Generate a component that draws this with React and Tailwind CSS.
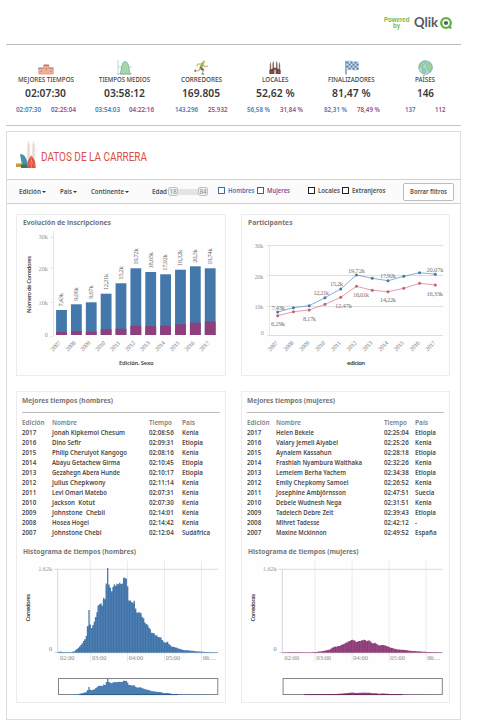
import React, { useLayoutEffect, useRef, useState } from "react";

const BLUE = "#4477aa";
const PURPLE = "#8f3f7b";

// Condenses or expands one line of text to a set width.
function Fit({ w, className = "", children }) {
  const ref = useRef(null);
  const [scale, setScale] = useState(1);
  useLayoutEffect(() => {
    const natural = ref.current.offsetWidth;
    if (natural) setScale(w / ref.current.getBoundingClientRect().width * scale);
  }, [w]);
  return (
    <span className={"block shrink-0 whitespace-pre " + className} style={{ width: w }}>
      <span ref={ref} className="inline-block origin-left whitespace-pre" style={{ transform: `scaleX(${scale})` }}>
        {children}
      </span>
    </span>
  );
}

const Podium = () => (
  <svg width="16" height="14" viewBox="0 0 16 14">
    <path d="M.8 7.5h5V4.3h5v2.9h4.4V13H.8z" fill="#f4b095" stroke="#dd8468" strokeWidth=".7" />
    <path d="M.6 8V7h5" stroke="#7c8da5" strokeWidth="1" fill="none" />
    <path d="M5.6 4.2h5.4" stroke="#cf5b4b" strokeWidth="1.1" />
    <path d="M11 7h4.5" stroke="#5f9fa0" strokeWidth="1.1" />
    <path d="M8.3 6.5v3M3.3 9.5v1.5M13 9.5v1.5" stroke="#b8604e" strokeWidth=".7" />
  </svg>
);
const Bell = () => (
  <svg width="15" height="15" viewBox="0 0 15 15">
    <path d="M1 0v14.5M0 14h15M1 7h14" stroke="#a9bcd0" strokeWidth=".7" fill="none" />
    <path d="M2.8 14C4.6 13 3.8 1.5 8.2 1.5S11.8 13 13.6 14z" fill="#a5d6ae" stroke="#6bab7a" strokeWidth=".7" />
  </svg>
);
const Runner = () => (
  <svg width="15" height="15" viewBox="0 0 15 15" fill="none" strokeLinecap="round" strokeLinejoin="round">
    <circle cx="9.8" cy="1.8" r="1.4" fill="#dcc063" />
    <path d="M8.6 3.6L6.8 7.6" stroke="#83b56f" strokeWidth="2.6" />
    <path d="M7.5 3.8L4 4.2 2.8 6M9 4.6l1.5 2 3-.4" stroke="#d3b75c" strokeWidth="1.2" />
    <path d="M6.7 8.2l2.5 1.7" stroke="#4a6592" strokeWidth="2.2" />
    <path d="M9.2 10l-.8 3.5M6.2 8.5L4.7 10.7 1 11" stroke="#cfae63" strokeWidth="1.2" />
    <path d="M8 13.7l1.8.5M1.2 10v1.7" stroke="#3e5e90" strokeWidth="1" />
  </svg>
);
const Church = () => (
  <svg width="12" height="15" viewBox="0 0 12 15">
    <path d="M.8 14V5l.7-3.5.7 3.5V14zM3.5 14V3.5l.8-3 .7 3V14zM7 14V3.5l.7-3 .8 3V14zM9.8 14V5l.7-3.5.7 3.5V14z" fill="#8c6a66" />
    <path d="M.4 14V10L6 7.5l5.6 2.5V14z" fill="#694541" />
    <path d="M5 14v-3.4l1-1.3 1 1.3V14M2.2 11v2M9.7 11v2" fill="#d5b3a3" stroke="#b98f83" strokeWidth=".4" />
  </svg>
);
const Flag = () => (
  <svg width="14" height="15" viewBox="0 0 14 15">
    <path d="M1 .8V14.5" stroke="#557bab" strokeWidth="1.2" />
    <path d="M1.3 1.6q3 -1.5 6 0t6 0v8q-3 1.4-6 0t-6 0z" fill="#dbe6f2" stroke="#7c9ac1" strokeWidth=".4" />
    {[0, 1, 2, 3].map((r) =>
      [0, 1, 2].map((c) => <rect key={r + "-" + c} x={1.5 + c * 4 + (r % 2) * 2} y={1.6 + r * 2} width="2" height="2" fill="#5278aa" />)
    )}
  </svg>
);
const Globe = () => (
  <svg width="15" height="15" viewBox="0 0 15 15">
    <circle cx="7.5" cy="7.5" r="6.8" fill="#a9dcdf" stroke="#71aab1" strokeWidth=".7" />
    <path d="M2 3.5L5.2 1l3 .6-.8 2.2-2.2 1-.6 2.6L2.3 7 .9 7.5zM4.5 8.2l3 .8.4 1.8L6 13.8 4.5 12zM9 3.5l3-1.3 2 3.5v3.6l-2.4 3-1.4-3-1.8-2.2z" fill="#a3cf98" stroke="#6ba6a0" strokeWidth=".5" />
  </svg>
);

const KPIS = [
  { icon: <Podium />, label: "MEJORES TIEMPOS", lw: 56, value: "02:07:30", vw: 41, a: "02:07:30", aw: 25, b: "02:25:04", bw: 25, gap: 10 },
  { icon: <Bell />, label: "TIEMPOS MEDIOS", lw: 51, value: "03:58:12", vw: 41, a: "03:54:03", aw: 25, b: "04:22:16", bw: 25, gap: 9.5 },
  { icon: <Runner />, label: "CORREDORES", lw: 41, value: "169.805", vw: 38, a: "143.296", aw: 23, b: "25.932", bw: 19.5, gap: 10 },
  { icon: <Church />, label: "LOCALES", lw: 26.5, value: "52,62 %", vw: 38.5, a: "56,58 %", aw: 23, b: "31,84 %", bw: 23, gap: 10 },
  { icon: <Flag />, label: "FINALIZADORES", lw: 46.5, value: "81,47 %", vw: 38.5, a: "82,31 %", aw: 23, b: "78,49 %", bw: 23, gap: 10 },
  { icon: <Globe />, label: "PAÍSES", lw: 20, value: "146", vw: 17, a: "137", aw: 10.5, b: "112", bw: 10.5, gap: 19.5 },
];

function Kpi({ k }) {
  return (
    <div className="flex flex-col items-center">
      <div className="flex h-[15px] items-end justify-center">{k.icon}</div>
      <Fit w={k.lw} className="mt-px h-[8px] text-[7px] font-medium leading-[8px] text-[#444]">{k.label}</Fit>
      <Fit w={k.vw} className="mt-[2px] h-[14px] text-[10.5px] font-semibold leading-[14px] text-[#383838]">{k.value}</Fit>
      <div className="mt-[5px] flex h-[10px] text-[6.8px] font-semibold leading-[10px]" style={{ gap: k.gap }}>
        <Fit w={k.aw} className="text-[#447ab3]">{k.a}</Fit>
        <Fit w={k.bw} className="text-[#9a4a86]">{k.b}</Fit>
      </div>
    </div>
  );
}

const YEARS = [2007, 2008, 2009, 2010, 2011, 2012, 2013, 2014, 2015, 2016, 2017];
const BARS = [
  ["7,43k", 310, 332], ["9,06k", 304.3, 331], ["9,67k", 302.3, 331.7], ["12,21k", 293.7, 329.3],
  ["15,2k", 283.3, 328.7], ["19,72k", 268.3, 325.7], ["18,65k", 272, 326], ["17,92k", 274.3, 325.7],
  ["19,32k", 269.7, 324.3], ["20,3k", 266.3, 322.7], ["19,74k", 268.3, 321.7],
];

const serif = "font-['Liberation_Serif',serif]";
const sans = "font-['Noto_Sans',sans-serif]";

function Years({ x0, step }) {
  return YEARS.map((y, i) => (
    <text key={y} transform={`translate(${x0 + i * step + 5},343.5) rotate(-45)`} textAnchor="end" fontSize="6" textLength="11.5" fill="#777">{y}</text>
  ));
}

function BarChart() {
  return (
    <svg width="208" height="143" viewBox="17 231 208 143" className={"block " + serif}>
      <path d="M53.5 231V336.5M50 237.3h3.5M50 268.3h3.5M50 302.3h3.5M50 336.3h3.5" stroke="#e4e4e4" fill="none" />
      <g fontSize="6.3" fill="#999" textAnchor="end">
        <text x="48" y="239.3" textLength="9.5">30k</text>
        <text x="48" y="270.5" textLength="9.5">20k</text>
        <text x="48" y="304.8" textLength="9.5">10k</text>
        <text x="48" y="336.5">0</text>
      </g>
      {BARS.map(([label, top, split], i) => {
        const x = 56.1 + i * 14.87;
        return (
          <g key={label}>
            <rect x={x} y={top} width="10.8" height={335 - top} fill={BLUE} />
            <rect x={x} y={split} width="10.8" height={335 - split} fill={PURPLE} />
            <text transform={`translate(${x + 7.3},${top - 3.5}) rotate(-90)`} fontSize="6.5" fill="#666" textLength={label.length === 6 ? 16.5 : 13.5}>{label}</text>
          </g>
        );
      })}
      <Years x0={56.2} step={14.87} />
      <g className={sans} fontSize="5.8" fontWeight="600" fill="#444">
        <text transform="translate(31.3,313) rotate(-90)" textLength="57">Número de Corredores</text>
        <text x="119" y="364.9" textLength="34.5">Edición, Sexo</text>
      </g>
    </svg>
  );
}

const MEN = [312, 307.7, 305.7, 297.7, 289, 275, 278.3, 280.7, 276.3, 272.7, 274.3];
const WOMEN = [315.7, 311.7, 310, 304.3, 297.3, 286.3, 290.3, 291.7, 288.3, 283.3, 285];
const LABELS = [
  ["7,43k", 271.5, 310, 13.5], ["12,21k", 313.5, 295, 15.5], ["15,2k", 330, 285.7, 13], ["19,72k", 348, 272.7, 17],
  ["17,92k", 380, 278, 16], ["20,07k", 426.5, 271.8, 17], ["6,29k", 271, 326.2, 14], ["8,17k", 303, 321.2, 13],
  ["12,47k", 335, 308, 17], ["16,01k", 353, 297, 16], ["14,22k", 380, 302, 16], ["16,33k", 426.5, 296, 16.5],
];
const lx = (i) => 277.7 + i * 15.76;

function Series({ ys, color }) {
  return (
    <g>
      <polyline points={ys.map((y, i) => `${lx(i)},${y}`).join(" ")} fill="none" stroke={color} strokeWidth=".6" />
      {ys.map((y, i) => <circle key={i} cx={lx(i)} cy={y} r="1.5" fill={color} />)}
    </g>
  );
}

function LineChart() {
  return (
    <svg width="207" height="143" viewBox="242 231 207 143" className={"block " + serif}>
      <path d="M267 245.5H443M267 275.5H443M267 306.5H443M267 335.5H443" stroke="#dedede" />
      <path d="M269.5 245V337" stroke="#e9e9e9" />
      <g fontSize="6.3" fill="#999" textAnchor="end">
        <text x="263.5" y="247.5" textLength="9">30k</text>
        <text x="263.5" y="278.5" textLength="9">20k</text>
        <text x="263.5" y="308.5" textLength="9">10k</text>
        <text x="264" y="335.3">0</text>
      </g>
      <Series ys={MEN} color="#4079b0" />
      <Series ys={WOMEN} color="#c8606f" />
      {LABELS.map(([t, x, y, w]) => <text key={t} x={x} y={y} textLength={w} fontSize="6.5" fill="#777">{t}</text>)}
      <Years x0={273.3} step={15.76} />
      <text x="347" y="364.9" textLength="18" className={sans} fontSize="5.8" fontWeight="600" fill="#333">edicion</text>
    </svg>
  );
}

// Outline points: x, height, in thirds of a pixel from the plot's bottom-left corner.
const MEN_HIST = [[0,1],[10,3],[16,1],[40,1],[50,4],[60,12],[70,22],[80,37],[87,52],[90,77],[92,128],[95,130],[97,97],[99,69],[105,82],[109,84],[113,105],[118,119],[121,147],[125,145],[135,142],[138,162],[143,165],[145,202],[148,217],[149,247],[151,245],[154,207],[156,197],[160,187],[165,194],[169,205],[172,187],[175,212],[179,200],[183,215],[187,207],[191,197],[195,215],[201,227],[204,239],[207,212],[211,187],[215,149],[221,159],[225,149],[231,151],[237,117],[243,125],[255,107],[265,87],[275,75],[281,62],[295,52],[300,49],[310,44],[320,30],[330,31],[340,19],[355,15],[375,8],[395,6],[425,3],[455,1],[479,0]];
const WOMEN_HIST = [[0,0],[45,1],[60,0],[85,0],[105,2],[125,5],[143,9],[155,17],[170,19],[183,25],[195,31],[205,37],[215,37],[223,32],[232,34],[245,39],[253,34],[262,37],[270,27],[280,29],[290,21],[303,23],[315,19],[330,13],[345,9],[365,8],[385,5],[415,3],[445,1],[479,0]];

function heightAt(points, x) {
  const j = points.findIndex((p) => p[0] >= x);
  if (j < 0) return 0;
  if (j === 0) return points[0][1];
  const [x0, y0] = points[j - 1];
  const [x1, y1] = points[j];
  return y0 + ((y1 - y0) * (x - x0)) / (x1 - x0);
}

const barsPath = (bars, left, base, k) =>
  `M${left} ${base}` + bars.map((h, i) => `V${(base - h * k).toFixed(2)}H${(left + (i + 1) * 1.333).toFixed(2)}`).join("") + `V${base}Z`;

function Histogram({ points, color, edge, x0, axis, right, yLabel }) {
  const bars = Array.from({ length: 120 }, (_, i) => {
    const h = heightAt(points, i * 4 + 2) / 3;
    return Math.max(0, h * (1 + (((i * 7) % 5) - 2) * 0.015));
  });
  return (
    <svg width="208" height="144" viewBox={`${x0} 558 208 144`} className={"block " + serif}>
      {[32.7, 69.8, 106.8, 143.7].map((dx) => (
        <path key={dx} d={`M${axis + dx} 561V662`} stroke="#e6e6e6" strokeWidth=".8" />
      ))}
      <path d={`M${axis - 4} 569.3H${right}`} stroke="#ddd" />
      <path d={`M${axis - 3} 652.6H${right}M${axis} 569V653`} stroke="#ccc" strokeWidth=".8" fill="none" />
      <path d={barsPath(bars, axis, 652.5, 1)} fill={color} />
      {bars.map((h, i) =>
        i % 2 === 0 && h > 2 ? <path key={i} d={`M${axis + i * 1.333} 652.5v${-h * 0.97}`} stroke={edge} strokeWidth=".5" opacity=".55" /> : null
      )}
      <path d={`M${axis} 652.6H${right}`} stroke={color} strokeWidth=".5" />
      <g fontSize="6.3" fill="#888">
        <text x={axis - 19.5} y="571.2" textLength="14" fill="#999">1.62k</text>
        <text x={axis - 8.8} y="651">0</text>
        {["02:00", "03:00", "04:00", "05:00", "06:…"].map((t, i) => (
          <text key={t} x={axis + [2.3, 34.2, 71, 108, 145][i]} y="660.3" textLength={i === 4 ? 13 : 14.5}>{t}</text>
        ))}
      </g>
      <text transform={`translate(${axis - 27.5},621.5) rotate(-90)`} textLength="27.5" className={sans} fontSize="5.8" fontWeight="600" fill="#333">{yLabel}</text>
      <rect x={axis + 0.8} y="678.5" width={right - axis - 1} height="16" fill="none" stroke="#858585" />
      <path d={barsPath(bars, axis, 695, 0.19)} fill={color} />
      <path d={`M${axis + 22} 694.6H${right - 40}`} stroke={edge} strokeWidth=".8" />
    </svg>
  );
}

const MEN_ROWS = [
  ["2017", "Jonah Kipkemoi Chesum", 73, "02:08:56", "Kenia", 16.5],
  ["2016", "Dino Sefir", 29, "02:09:31", "Etiopia", 21],
  ["2015", "Philip Cheruiyot Kangogo", 75, "02:08:16", "Kenia", 16.5],
  ["2014", "Abayu Getachew Girma", 68, "02:10:45", "Etiopia", 21],
  ["2013", "Gezahegn Abera Hunde", 68, "02:10:17", "Etiopia", 21],
  ["2012", "Julius Chepkwony", 53.5, "02:11:14", "Kenia", 16.5],
  ["2011", "Levi Omari Matebo", 55, "02:07:31", "Kenia", 16.5],
  ["2010", "Jackson  Kotut", 43, "02:07:30", "Kenia", 16.5],
  ["2009", "Johnstone  Chebii", 53, "02:14:01", "Kenia", 16.5],
  ["2008", "Hosea Hogei", 37, "02:14:42", "Kenia", 16.5],
  ["2007", "Johnstone Chebi", 49.5, "02:12:04", "Sudáfrica", 28],
];
const WOMEN_ROWS = [
  ["2017", "Helen Bekele", 38, "02:25:04", "Etiopia", 21],
  ["2016", "Valary Jemeli Aiyabei", 62, "02:25:26", "Kenia", 16.5],
  ["2015", "Aynalem Kassahun", 55.5, "02:28:18", "Etiopia", 21],
  ["2014", "Frashiah Nyambura Waithaka", 86, "02:32:26", "Kenia", 16.5],
  ["2013", "Lemelem Berha Yachem", 70, "02:34:38", "Etiopia", 21],
  ["2012", "Emily Chepkomy Samoei", 72.5, "02:26:52", "Kenia", 16.5],
  ["2011", "Josephine Ambjörnsson", 70, "02:47:51", "Suecia", 19.5],
  ["2010", "Debele Wudnesh Nega", 65.5, "02:31:51", "Kenia", 16.5],
  ["2009", "Tadelech Debre Zeit", 57.5, "02:39:43", "Etiopia", 21],
  ["2008", "Mihret Tadesse", 43.5, "02:42:12", "-", 2],
  ["2007", "Maxine Mckinnon", 50.5, "02:49:52", "España", 21.5],
];

function Times({ rows, cols }) {
  return (
    <div className="text-[6.7px] font-semibold leading-[10px] text-[#4a4a4a]">
      <div className={"grid h-[10px] text-[#808080] " + cols}>
        <Fit w={22.5}>Edición</Fit>
        <Fit w={25}>Nombre</Fit>
        <Fit w={23}>Tiempo</Fit>
        <Fit w={13}>País</Fit>
      </div>
      {rows.map(([year, name, nw, time, country, cw]) => (
        <div key={year} className={"grid h-[10px] " + cols}>
          <Fit w={14.2}>{year}</Fit>
          <Fit w={nw}>{name}</Fit>
          <Fit w={24.7}>{time}</Fit>
          <Fit w={cw}>{country}</Fit>
        </div>
      ))}
    </div>
  );
}

const card = "border border-[#ececec] bg-[#fefefe]";
const title = "h-[10px] text-[7px] font-bold leading-[10px] text-[#777]";

function Caret() {
  return <span className="ml-px mt-px h-0 w-0 border-x-[2px] border-t-[2px] border-x-transparent border-t-[#333]" />;
}

function Check({ label, w, box, text }) {
  return (
    <label className="flex items-center gap-[3px]">
      <span className={"block h-[7px] w-[7px] shrink-0 border bg-white " + box} />
      <Fit w={w} className={text}>{label}</Fit>
    </label>
  );
}

function CityLogo() {
  return (
    <svg width="21" height="28" viewBox="0 0 21 28">
      <path d="M11.4 23V6l1.2-5.5L13.8 6v17zM16.4 23V6l1.2-5.5L18.8 6v17z" fill="#f4ebe6" stroke="#dccbc5" strokeWidth=".4" />
      <path d="M12.6 3v15M17.6 3v15" stroke="#dda294" strokeWidth=".6" strokeDasharray="1 1.2" />
      <path d="M4 13c4.5 0 7 4 7.5 11H6z" fill="#4593a0" />
      <path d="M0 22.5h7v3.5H0z" fill="#c49b3d" />
      <path d="M5 23.5h6V27H5z" fill="#38717e" />
      <path d="M11 27c0-7 2-9.5 4.3-12.5 2.5 3 4.4 5.500 4.4 12.500z" fill="#dc5140" />
      <path d="M15.4 15.500v6M12 25l3.500-5.500L18.800 25M15.400 22v5" stroke="#f3b3a0" strokeWidth=".5" fill="none" />
    </svg>
  );
}

export default function App() {
  return (
    <div className="h-[725px] w-[477px] overflow-hidden bg-white pl-[6px] font-['Noto_Sans','Open_Sans',sans-serif]">
      <div className="w-[455px]">
        <header className="flex h-[45px] justify-end border-b border-[#bbb] pr-[8px] pt-[15px]">
          <div className="mr-[5px] mt-[2px] flex flex-col items-center font-['Liberation_Sans',sans-serif] text-[6.5px] font-bold leading-[6px] text-[#6cbc48]">
            <Fit w={25.5}>Powered</Fit>
            <Fit w={7}>by</Fit>
          </div>
          <Fit w={24} className="mt-[1px] h-[14px] font-['Lato',sans-serif] text-[12.5px] font-bold leading-[14px] text-[#56585c]">Qlik</Fit>
          <svg className="ml-[2px] mt-[2px]" width="13" height="13" viewBox="0 0 13 13">
            <circle cx="6" cy="6" r="4.8" fill="none" stroke="#5cb53c" strokeWidth="2.3" />
            <circle cx="6" cy="6" r="2.1" fill="#5a5c60" />
            <path d="M8.5 8.8l2.800 2.700" stroke="#5cb53c" strokeWidth="2" />
          </svg>
        </header>

        <section className="grid h-[81px] grid-cols-[79px_79px_74px_74px_79px_68px] border-b border-[#c4c4c4] pt-[15px]">
          {KPIS.map((k) => <Kpi key={k.label} k={k} />)}
        </section>

        <main className="mt-[5px] h-[589px] border border-[#ddd]">
          <div className="flex h-[47px] pl-[9px] pt-[9px]">
            <CityLogo />
            <Fit w={106} className="ml-[4px] mt-[6px] h-[18px] font-['Roboto',sans-serif] text-[13.5px] leading-[18px] text-[#da4f47]">DATOS DE LA CARRERA</Fit>
          </div>

          <div className="flex h-[25px] items-center border-y border-[#d0d0d0] bg-[#fbfbfb] pl-[12px] text-[6.8px] font-semibold leading-[10px] text-[#505050]">
            <div className="flex w-[41px] items-center"><Fit w={22}>Edición</Fit><Caret /></div>
            <div className="flex w-[31px] items-center"><Fit w={12}>País</Fit><Caret /></div>
            <div className="flex w-[61px] items-center"><Fit w={33}>Continente</Fit><Caret /></div>
            <Fit w={15}>Edad</Fit>
            <div className="ml-[1px] flex h-[9px] w-[40px] items-center justify-between text-[6.3px] font-normal leading-[7px] text-[#888]">
              <span className="flex h-[9px] w-[10px] items-center justify-center rounded-[2px] border border-[#c4c4c4] bg-[#f0f0f0]">18</span>
              <span className="h-[6px] grow bg-[#e4e4e4]" />
              <span className="flex h-[9px] w-[10px] items-center justify-center rounded-[2px] border border-[#c4c4c4] bg-[#f0f0f0]">84</span>
            </div>
            <div className="mb-[2px] ml-[10px] flex">
              <Check label="Hombres" w={26.5} box="border-[#356fae]" text="text-[#447ab3]" />
              <span className="w-[2.5px]" />
              <Check label="Mujeres" w={23} box="border-[#933c7c]" text="text-[#9a4a86]" />
              <span className="w-[18px]" />
              <Check label="Locales" w={22} box="border-[#222]" text="" />
              <span className="w-[2px]" />
              <Check label="Extranjeros" w={33.5} box="border-[#222]" text="" />
            </div>
            <button className="ml-auto mr-[6px] flex h-[18px] w-[51px] items-center justify-center rounded-[2px] border border-[#bdbdbd] bg-white">
              <Fit w={37}>Borrar filtros</Fit>
            </button>
          </div>

          <div className="grid grid-cols-[210px_209px] gap-[15px] pl-[9px] pt-[10px]">
            <section className={card + " h-[162px]"}>
              <div className="h-[16px] pl-[6px] pt-[3px]"><Fit w={88} className={title}>Evolución de inscripciones</Fit></div>
              <BarChart />
            </section>
            <section className={card + " h-[162px]"}>
              <div className="h-[16px] pl-[5.5px] pt-[3px]"><Fit w={44.5} className={title}>Participantes</Fit></div>
              <LineChart />
            </section>

            <section className={card + " h-[312px]"}>
              <div className="mx-[5px] h-[21px] border-b border-[#bbb] pt-[4px]"><Fit w={91} className={title}>Mejores tiempos (hombres)</Fit></div>
              <div className="pl-[5px] pt-[5px]"><Times rows={MEN_ROWS} cols="grid-cols-[30px_97px_33px_1fr]" /></div>
              <div className="h-[20px] pl-[6px] pt-[9px]"><Fit w={113} className={title}>Histograma de tiempos (hombres)</Fit></div>
              <Histogram points={MEN_HIST} color="#4a7db2" edge="#24507f" x0={17} axis={57.7} right={218} yLabel="Corredores" />
            </section>
            <section className={card + " h-[312px]"}>
              <div className="mx-[5px] h-[21px] border-b border-[#bbb] pt-[4px]"><Fit w={88} className={title}>Mejores tiempos (mujeres)</Fit></div>
              <div className="pl-[4.5px] pt-[5px]"><Times rows={WOMEN_ROWS} cols="grid-cols-[29.3px_108px_31px_1fr]" /></div>
              <div className="h-[20px] pl-[5.5px] pt-[9px]"><Fit w={110.5} className={title}>Histograma de tiempos (mujeres)</Fit></div>
              <Histogram points={WOMEN_HIST} color="#95467f" edge="#5c2150" x0={242} axis={282.3} right={442.5} yLabel="Corredoras" />
            </section>
          </div>
        </main>
      </div>
    </div>
  );
}
